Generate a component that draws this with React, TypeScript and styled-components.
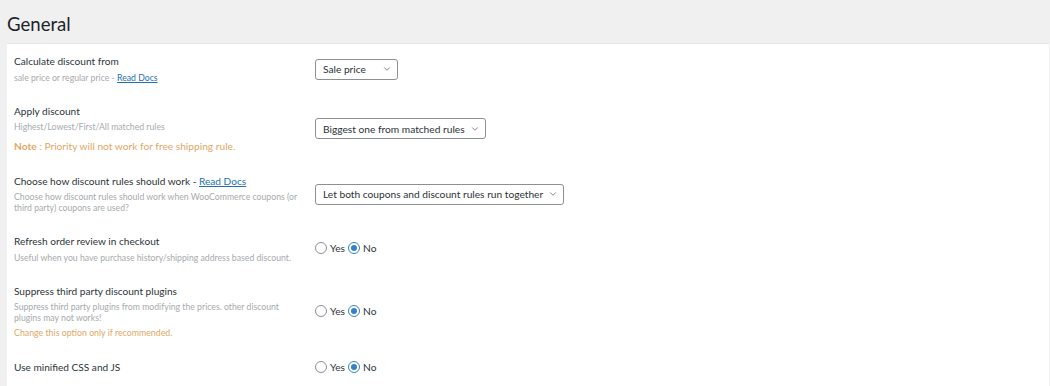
import { FC } from 'react'
import styled, { createGlobalStyle } from 'styled-components'
import { ChevronDown } from 'lucide-react'

const GlobalStyle = createGlobalStyle`
  body {
    margin: 0;
    background: #f0f0f1;
    font-family: Lato, "Noto Sans", sans-serif;
    color: #2c3338;
  }
`

type Setting = {
  title: string
  titleLink?: boolean
  desc: string
  descLink?: boolean
  note?: { label?: string; text: string }
  control: { kind: 'select'; value: string } | { kind: 'radio' }
}

const settings: Setting[] = [
  {
    title: 'Calculate discount from',
    desc: 'sale price or regular price - ',
    descLink: true,
    control: { kind: 'select', value: 'Sale price' },
  },
  {
    title: 'Apply discount',
    desc: 'Highest/Lowest/First/All matched rules',
    note: { label: 'Note', text: ' : Priority will not work for free shipping rule.' },
    control: { kind: 'select', value: 'Biggest one from matched rules' },
  },
  {
    title: 'Choose how discount rules should work - ',
    titleLink: true,
    desc: 'Choose how discount rules should work when WooCommerce coupons (or third party) coupons are used?',
    control: { kind: 'select', value: 'Let both coupons and discount rules run together' },
  },
  {
    title: 'Refresh order review in checkout',
    desc: 'Useful when you have purchase history/shipping address based discount.',
    control: { kind: 'radio' },
  },
  {
    title: 'Suppress third party discount plugins',
    desc: 'Suppress third party plugins from modifying the prices. other discount plugins may not works!',
    note: { text: 'Change this option only if recommended.' },
    control: { kind: 'radio' },
  },
  {
    title: 'Use minified CSS and JS',
    desc: '',
    control: { kind: 'radio' },
  },
]

const YesNo: FC = () => (
  <Radios>
    <RadioLabel>
      <Radio />
      Yes
    </RadioLabel>
    <RadioLabel>
      <Radio $checked />
      No
    </RadioLabel>
  </Radios>
)

const App: FC = () => {
  return (
    <>
      <GlobalStyle />
      <Heading>General</Heading>
      <Panel>
        {settings.map((s) => (
          <Row key={s.title}>
            <Info>
              <Title>
                {s.title}
                {s.titleLink && <Link>Read Docs</Link>}
              </Title>
              {s.desc && (
                <Desc>
                  {s.desc}
                  {s.descLink && <Link>Read Docs</Link>}
                </Desc>
              )}
              {s.note && (
                <Note $big={!!s.note.label}>
                  {s.note.label && <b>{s.note.label}</b>}
                  {s.note.text}
                </Note>
              )}
            </Info>
            <Control>
              {s.control.kind === 'select' ? (
                <Select>
                  <span>{s.control.value}</span>
                  <ChevronDown size={10} strokeWidth={1.75} />
                </Select>
              ) : (
                <YesNo />
              )}
            </Control>
          </Row>
        ))}
      </Panel>
    </>
  )
}

export default App

const Heading = styled.h2`
  margin: 0;
  padding: 10px 7px 0;
  height: 33px;
  font-size: 18.6px;
  font-weight: 400;
  line-height: 29px;
  color: #1d2327;
`
const Panel = styled.div`
  background: #fff;
  margin-left: 7px;
  margin-right: 1px;
  padding: 0 7px;
  border-top: 1px solid #e6e6e7;
  min-height: 343px;
  box-sizing: border-box;
`
const Row = styled.div`
  display: flex;
  align-items: center;
  padding: 10px 0 11px;
`
const Info = styled.div`
  width: 288px;
  flex: none;
`
const Title = styled.div`
  font-size: 10.1px;
  line-height: 14px;
  color: #2c3338;
`
const Desc = styled.div`
  font-size: 8.7px;
  line-height: 11px;
  color: #a7aaad;
  margin-top: 3.5px;
`
const Link = styled.a`
  color: #2271b1;
  text-decoration: underline;
  cursor: pointer;
`
const Note = styled.div<{ $big: boolean }>`
  font-size: ${(p) => (p.$big ? '10.2px' : '8.8px')};
  line-height: ${(p) => (p.$big ? '14px' : '12px')};
  color: #dfa865;
  margin-top: ${(p) => (p.$big ? '6.5px' : '3.5px')};
  b {
    font-weight: 700;
  }
`
const Control = styled.div`
  margin-left: 13px;
`
const Select = styled.div`
  display: inline-flex;
  align-items: center;
  justify-content: space-between;
  gap: 5px;
  min-width: 83px;
  height: 21px;
  box-sizing: border-box;
  padding: 0 5px 0 7px;
  border: 1px solid #8c8f94;
  border-radius: 3px;
  font-size: 10.2px;
  color: #2c3338;
  svg {
    color: #50575e;
  }
`
const Radios = styled.div`
  display: flex;
  align-items: center;
  gap: 3px;
`
const RadioLabel = styled.label`
  display: flex;
  align-items: center;
  gap: 3px;
  font-size: 10.2px;
  color: #2c3338;
`
const Radio = styled.span<{ $checked?: boolean }>`
  width: 12px;
  height: 12px;
  border-radius: 50%;
  border: 1px solid ${(p) => (p.$checked ? '#3582c4' : '#8c8f94')};
  box-sizing: border-box;
  position: relative;
  &::after {
    content: '';
    display: ${(p) => (p.$checked ? 'block' : 'none')};
    position: absolute;
    inset: 2px;
    border-radius: 50%;
    background: #3582c4;
  }
`
